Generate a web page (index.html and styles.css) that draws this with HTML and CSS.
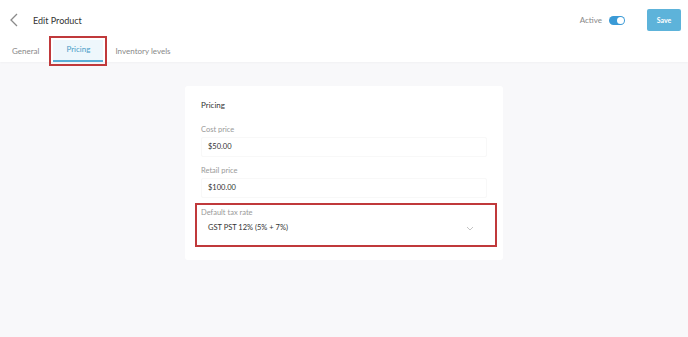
FILE: index.html
```html
<!DOCTYPE html>
<html lang="en">
<head>
    <meta charset="UTF-8">
    <meta name="viewport" content="width=device-width, initial-scale=1.0">
    <title>Edit Product</title>
    <link rel="stylesheet" href="styles.css">
</head>
<body>
    <div class="header">
        <div class="topbar">
            <div class="back">
                <svg width="10" height="14" viewBox="0 0 10 14">
                    <path d="M8 1 L2 7 L8 13" fill="none" stroke="#8a8a8a" stroke-width="1.3"/>
                </svg>
            </div>
            <div class="title">Edit Product</div>
            <div class="actions">
                <span class="active-label">Active</span>
                <span class="toggle"><span class="knob"></span></span>
                <button class="save">Save</button>
            </div>
        </div>
        <div class="tabs">
            <div class="tab">General</div>
            <div class="tab tab-current">Pricing</div>
            <div class="tab">Inventory levels</div>
        </div>
    </div>

    <div class="card">
        <div class="card-title">Pricing</div>

        <div class="field">
            <label>Cost price</label>
            <div class="input">$50.00</div>
        </div>
        <div class="field">
            <label>Retail price</label>
            <div class="input">$100.00</div>
        </div>

        <!-- highlighted -->
        <div class="field field-marked">
            <label>Default tax rate</label>
            <div class="input select">
                GST PST 12% (5% + 7%)
                <svg class="chevron" width="8" height="5" viewBox="0 0 8 5">
                    <path d="M1 1 L4 4 L7 1" fill="none" stroke="#c4c4c4" stroke-width="1"/>
                </svg>
            </div>
        </div>
    </div>
</body>
</html>
```

FILE: styles.css
```css
body {
    margin: 0;
    background: #f8f8fa;
    font-family: Lato, "Open Sans", sans-serif;
    color: #333;
}
.header {
    background: #fff;
    height: 62px;
    box-shadow: 0 1px 2px rgba(0, 0, 0, 0.03);
}
.topbar {
    display: flex;
    align-items: center;
    height: 40px;
    padding-left: 9px;
}
.back {
    width: 24px;
    display: flex;
    align-items: center;
}
.title {
    font-size: 9px;
    color: #333;
}
.actions {
    margin-left: auto;
    display: flex;
    align-items: center;
    padding-right: 7px;
}
.active-label {
    font-size: 8px;
    color: #888;
    margin-right: 7px;
}
.toggle {
    width: 16px;
    height: 9px;
    border-radius: 5px;
    background: #3a9ad6;
    position: relative;
    margin-right: 22px;
}
.knob {
    position: absolute;
    right: 1px;
    top: 1px;
    width: 7px;
    height: 7px;
    border-radius: 50%;
    background: #fff;
}
.save {
    width: 34px;
    height: 22px;
    border: none;
    border-radius: 2px;
    background: #5db3da;
    color: #fff;
    font-family: Lato, sans-serif;
    font-size: 7px;
    font-weight: bold;
    padding: 0;
}
.tabs {
    display: flex;
    align-items: flex-end;
    height: 22px;
    padding-left: 4px;
}
.tab {
    font-size: 8px;
    color: #888;
    padding: 0 8px;
    height: 20px;
    line-height: 18px;
}
.tab-current {
    color: #4a9cc7;
    background: #eef7fc;
    border-bottom: 2px solid #5aaed6;
    width: 34px;
    margin: 0 4px 0 6px;
    text-align: center;
    outline: 2px solid #c0393b;
    outline-offset: 2px;
}
.card {
    width: 286px;
    margin: 24px auto 0;
    background: #fff;
    border-radius: 3px;
    padding: 14px 16px 13px 16px;
}
.card-title {
    font-size: 8px;
    color: #333;
    margin-bottom: 15px;
}
.field {
    margin-bottom: 9px;
}
.field label {
    display: block;
    font-size: 7.5px;
    color: #999;
    margin-bottom: 3px;
}
.input {
    font-size: 7.5px;
    color: #333;
    height: 18px;
    line-height: 18px;
    padding-left: 6px;
    border: 1px solid #f8f8f8;
    border-radius: 2px;
    position: relative;
}
.field-marked {
    margin: -4px -10px 0 -6px;
    padding: 3px 10px 9px 4px;
    border: 2px solid #c0393b;
}
.field-marked .input {
    border-color: #fff;
    height: 14px;
    line-height: 14px;
}
.chevron {
    position: absolute;
    right: 10px;
    top: 5px;
}
```
